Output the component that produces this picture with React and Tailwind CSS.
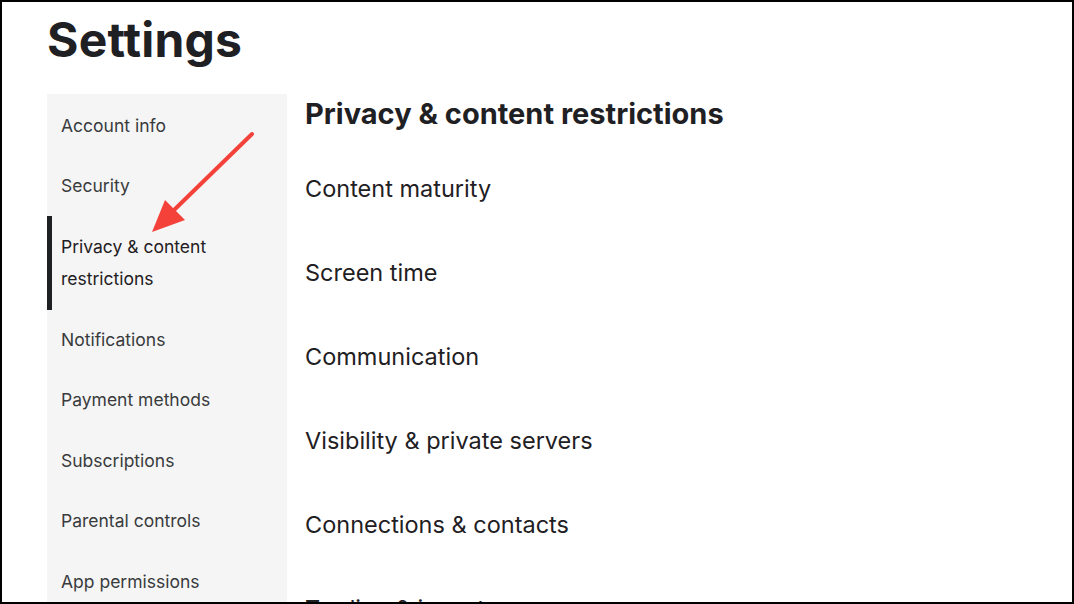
export default function App() {
  const nav = [
    "Account info",
    "Security",
    "Privacy & content restrictions",
    "Notifications",
    "Payment methods",
    "Subscriptions",
    "Parental controls",
    "App permissions",
    "Experience chat",
  ];
  const items = [
    "Content maturity",
    "Screen time",
    "Communication",
    "Visibility & private servers",
    "Connections & contacts",
    "Trading & inventory",
  ];
  return (
    <div
      className="relative w-[1074px] h-[604px] overflow-hidden border-2 border-black bg-white text-[#1f2023]"
      style={{ fontFamily: "Inter, 'Noto Sans', sans-serif" }}
    >
      <div className="pl-[45px]">
        <h1 className="pt-[8px] h-[92px] text-[48px] font-bold leading-[60px] tracking-[0.2px] text-[#1f2023]">
          Settings
        </h1>
        <div className="flex">
          <div className="w-[240px] shrink-0 bg-[#f5f5f5] pt-[1.5px]">
            {nav.map((n, i) => (
              <div
                key={n}
                className={
                  "relative px-[14px] py-[14.3px] text-[17.5px] leading-[32px] " +
                  (i === 2 ? "text-[#1f2023] pr-[60px]" : "text-[#393b3d]")
                }
              >
                {i === 2 && (
                  <span className="absolute left-0 -top-[1px] -bottom-[1px] w-[5px] bg-[#1f2023]" />
                )}
                {n}
              </div>
            ))}
          </div>
          <div className="pl-[18px] pt-[2px]">
            <h2 className="text-[29px] font-bold leading-[36px] mb-[15px]">
              Privacy &amp; content restrictions
            </h2>
            {items.map((t) => (
              <div key={t} className="text-[23.5px] leading-[28px] py-[28px]">
                {t}
              </div>
            ))}
          </div>
        </div>
      </div>
      <svg
        className="absolute left-[146px] top-[126px]"
        width="110"
        height="110"
        viewBox="146 126 110 110"
      >
        <line x1="250" y1="132" x2="170" y2="210" stroke="#f4413a" strokeWidth="4" strokeLinecap="round" />
        <polygon points="150,230 163,198 183,218" fill="#f4413a" />
      </svg>
    </div>
  );
}
